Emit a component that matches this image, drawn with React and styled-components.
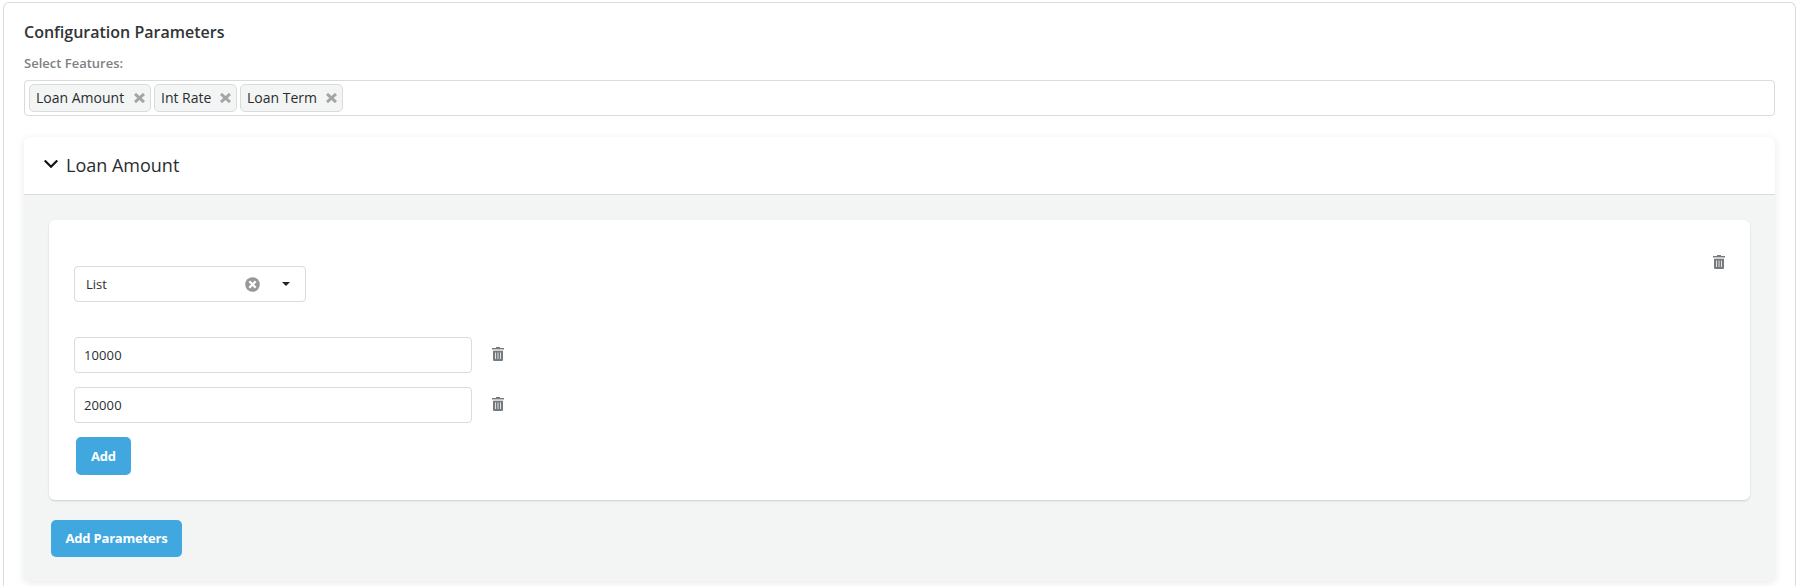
import React from "react";
import styled, { createGlobalStyle } from "styled-components";

const GlobalStyle = createGlobalStyle`
  * { box-sizing: border-box; }
  body {
    margin: 0;
    background: #fff;
    color: #292d30;
    font-family: "Open Sans", "Noto Sans", sans-serif;
    font-size: 14px;
  }
`;

const Page = styled.div`
  height: 586px;
  padding: 2px 4px 0 3px;
  overflow: hidden;
`;

const Panel = styled.main`
  height: 584px;
  padding: 19px 20px 0;
  border: 1px solid #d9dcdc;
  border-bottom: 0;
  border-radius: 6px 6px 0 0;
`;

const Title = styled.h2`
  margin: 0;
  color: #303437;
  font-size: 16px;
  font-weight: 600;
  line-height: 20px;
`;

const Label = styled.label`
  display: block;
  margin-top: 11px;
  height: 27px;
  color: #7c8284;
  font-size: 13px;
  font-weight: 600;
  line-height: 20px;
`;

const TagField = styled.div`
  display: flex;
  gap: 3px;
  height: 36px;
  padding: 3px 4px;
  border: 1px solid #d9dcdc;
  border-radius: 4px;
`;

const Tag = styled.span`
  display: flex;
  align-items: center;
  justify-content: space-between;
  width: ${(p) => p.$width}px;
  height: 28px;
  padding: 0 5px 0 6px;
  background: #f3f5f4;
  border: 1px solid #d9dcdc;
  border-radius: 5px;
  line-height: 24px;
  white-space: nowrap;
`;

const Accordion = styled.section`
  height: 444px;
  margin-top: 21px;
  background: #f3f5f4;
  border-radius: 6px;
  box-shadow: 0 2px 10px rgba(0, 0, 0, 0.09);
`;

const AccordionHeader = styled.header`
  display: flex;
  align-items: center;
  gap: 8px;
  height: 58px;
  padding: 0 20px 2px;
  background: #fff;
  border-bottom: 1px solid #d9dcdc;
  border-radius: 6px 6px 0 0;
  font-size: 18px;
`;

const AccordionBody = styled.div`
  padding: 25px 25px 0;
`;

const Card = styled.div`
  display: flex;
  justify-content: space-between;
  height: 280px;
  padding: 35px 25px 0 25px;
  background: #fff;
  border-radius: 6px;
  box-shadow: 0 1px 2px rgba(0, 0, 0, 0.16);
`;

const Form = styled.div`
  display: flex;
  flex-direction: column;
  align-items: flex-start;
  padding-top: 11px;
`;

const Select = styled.div`
  display: flex;
  align-items: center;
  width: 232px;
  height: 36px;
  margin-bottom: 35px;
  padding: 0 15px 0 11px;
  border: 1px solid #d9dcdc;
  border-radius: 4px;
  font-size: 13px;
`;

const SelectValue = styled.span`
  flex: 1;
`;

const ValueRow = styled.div`
  display: flex;
  align-items: flex-start;
  gap: 20px;
  margin-bottom: 14px;
`;

const Input = styled.input`
  width: 398px;
  height: 36px;
  padding: 0 9px;
  color: #292d30;
  background: #fff;
  border: 1px solid #d9dcdc;
  border-radius: 4px;
  font: 13px "Open Sans", "Noto Sans", sans-serif;
  letter-spacing: 0.1px;
  outline: none;
`;

const IconButton = styled.button`
  display: flex;
  margin: ${(p) => p.$top || 0}px 0 0;
  padding: 0;
  border: 0;
  background: none;
`;

const Button = styled.button`
  width: ${(p) => p.$width}px;
  height: ${(p) => p.$height}px;
  margin: ${(p) => p.$top || 0}px 0 0 2px;
  padding: 0 0 1px;
  border: 0;
  border-radius: 5px;
  background: #40a8df;
  color: #fff;
  font: 700 13px "Open Sans", "Noto Sans", sans-serif;
  letter-spacing: -0.2px;
`;

const CloseMark = () => (
  <svg width="11" height="10" viewBox="0 0 11 10" stroke="#a3a5a5" strokeWidth="3">
    <path d="M1 1l9 8M10 1l-9 8" />
  </svg>
);

const Chevron = () => (
  <svg width="14" height="9" viewBox="0 0 14 9" fill="none" stroke="#111" strokeWidth="2.2">
    <path d="M.7 .5 7 6.7 13.3 .5" />
  </svg>
);

const ClearIcon = () => (
  <svg width="15" height="15" viewBox="0 0 15 15">
    <circle cx="7.5" cy="7.5" r="7.3" fill="#989898" />
    <path d="m4.3 4.3 6.4 6.4m0-6.4-6.4 6.4" stroke="#fff" strokeWidth="2.3" />
  </svg>
);

const Caret = styled.svg`
  margin-left: 22px;
`;

const Trash = () => (
  <svg width="12" height="14" viewBox="0 0 12 14">
    <path d="M4 0h4v1h4v1.5H0V1h4z" fill="#757a7e" />
    <path d="M1 4h10v8.8q0 1.2-1.2 1.2H2.2Q1 14 1 12.8z" fill="#757a7e" />
    <path d="M1 2.5h10V4H1z" fill="#d3d6d8" />
    <path d="M3.5 5.5V12M6 5.5V12M8.5 5.5V12" stroke="#dfe1e2" />
  </svg>
);

const features = [
  { name: "Loan Amount", width: 122 },
  { name: "Int Rate", width: 83 },
  { name: "Loan Term", width: 103 },
];

export default function App() {
  return (
    <Page>
      <GlobalStyle />
      <Panel>
        <Title>Configuration Parameters</Title>
        <Label>Select Features:</Label>
        <TagField>
          {features.map((f) => (
            <Tag key={f.name} $width={f.width}>
              {f.name}
              <CloseMark />
            </Tag>
          ))}
        </TagField>
        <Accordion>
          <AccordionHeader>
            <Chevron />
            Loan Amount
          </AccordionHeader>
          <AccordionBody>
            <Card>
              <Form>
                <Select>
                  <SelectValue>List</SelectValue>
                  <ClearIcon />
                  <Caret width="8" height="4" viewBox="0 0 8 4">
                    <path d="M0 0h8L4 4z" fill="#222" />
                  </Caret>
                </Select>
                {["10000", "20000"].map((value) => (
                  <ValueRow key={value}>
                    <Input defaultValue={value} />
                    <IconButton $top={10} aria-label="Delete value">
                      <Trash />
                    </IconButton>
                  </ValueRow>
                ))}
                <Button $width={55} $height={38}>Add</Button>
              </Form>
              <div>
                <IconButton aria-label="Delete parameter">
                  <Trash />
                </IconButton>
              </div>
            </Card>
            <Button $width={131} $height={37} $top={20}>Add Parameters</Button>
          </AccordionBody>
        </Accordion>
      </Panel>
    </Page>
  );
}
